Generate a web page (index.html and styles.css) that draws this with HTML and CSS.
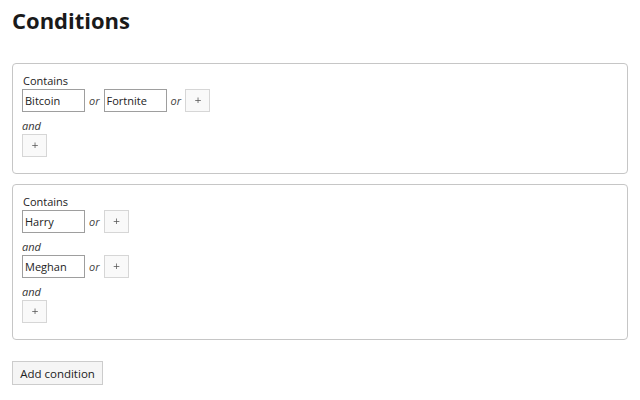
FILE: index.html
```html
<!DOCTYPE html>
<html>
<head>
<meta charset="utf-8">
<link rel="stylesheet" href="styles.css">
</head>
<body>
<h1 class="title">Conditions</h1>

<div class="condition">
  <div class="label">Contains</div>
  <div class="row">
    <input class="term" type="text" value="Bitcoin">
    <span class="op">or</span>
    <input class="term" type="text" value="Fortnite">
    <span class="op">or</span>
    <button class="plus">+</button>
  </div>
  <div class="and">and</div>
  <div class="row">
    <button class="plus">+</button>
  </div>
</div>

<div class="condition">
  <div class="label">Contains</div>
  <div class="row">
    <input class="term" type="text" value="Harry">
    <span class="op">or</span>
    <button class="plus">+</button>
  </div>
  <div class="and">and</div>
  <div class="row">
    <input class="term" type="text" value="Meghan">
    <span class="op">or</span>
    <button class="plus">+</button>
  </div>
  <div class="and">and</div>
  <div class="row">
    <button class="plus">+</button>
  </div>
</div>

<button class="add">Add condition</button>
</body>
</html>
```

FILE: styles.css
```css
html, body {
  margin: 0;
  padding: 0;
  background: #ffffff;
}
body {
  padding: 5px 12px 0 12px;
  font-family: "Open Sans", "Noto Sans", sans-serif;
  font-size: 11px;
  color: #222222;
}
.title {
  margin: 0 0 28px 0;
  font-size: 22px;
  line-height: 30px;
  font-weight: 700;
  color: #1a1a1a;
}
.condition {
  border: 1px solid #c6c6c6;
  border-radius: 4px;
  padding: 8px 9px 16px 9px;
  margin-bottom: 10px;
}
.label {
  line-height: 17px;
  padding-left: 1px;
}
.row {
  display: flex;
  align-items: center;
  gap: 4px;
  height: 23px;
}
.term {
  box-sizing: border-box;
  width: 63px;
  height: 23px;
  margin: 0;
  padding: 0 2px;
  border: 1px solid #9e9e9e;
  border-radius: 0;
  font-family: "Open Sans", "Noto Sans", sans-serif;
  font-size: 11px;
  color: #222222;
  background: #ffffff;
  outline: none;
}
.op {
  font-style: italic;
  color: #444444;
}
.plus {
  box-sizing: border-box;
  display: flex;
  align-items: center;
  justify-content: center;
  width: 25px;
  height: 23px;
  margin: 0;
  padding: 0 0 1px 1px;
  border: 1px solid #d6d6d6;
  background: #f9f9f9;
  font-family: "DejaVu Sans", sans-serif;
  font-size: 9px;
  line-height: 1;
  color: #555555;
  border-radius: 0;
  filter: grayscale(1);
}
.and {
  font-style: italic;
  color: #333333;
  height: 22px;
  box-sizing: border-box;
  padding-top: 6px;
  line-height: 16px;
}
.add {
  box-sizing: border-box;
  margin-top: 11px;
  height: 24px;
  width: 91px;
  padding: 0;
  border: 1px solid #cccccc;
  background: #f5f5f5;
  font-family: "Open Sans", "Noto Sans", sans-serif;
  font-size: 11.5px;
  color: #222222;
  border-radius: 0;
}
```
